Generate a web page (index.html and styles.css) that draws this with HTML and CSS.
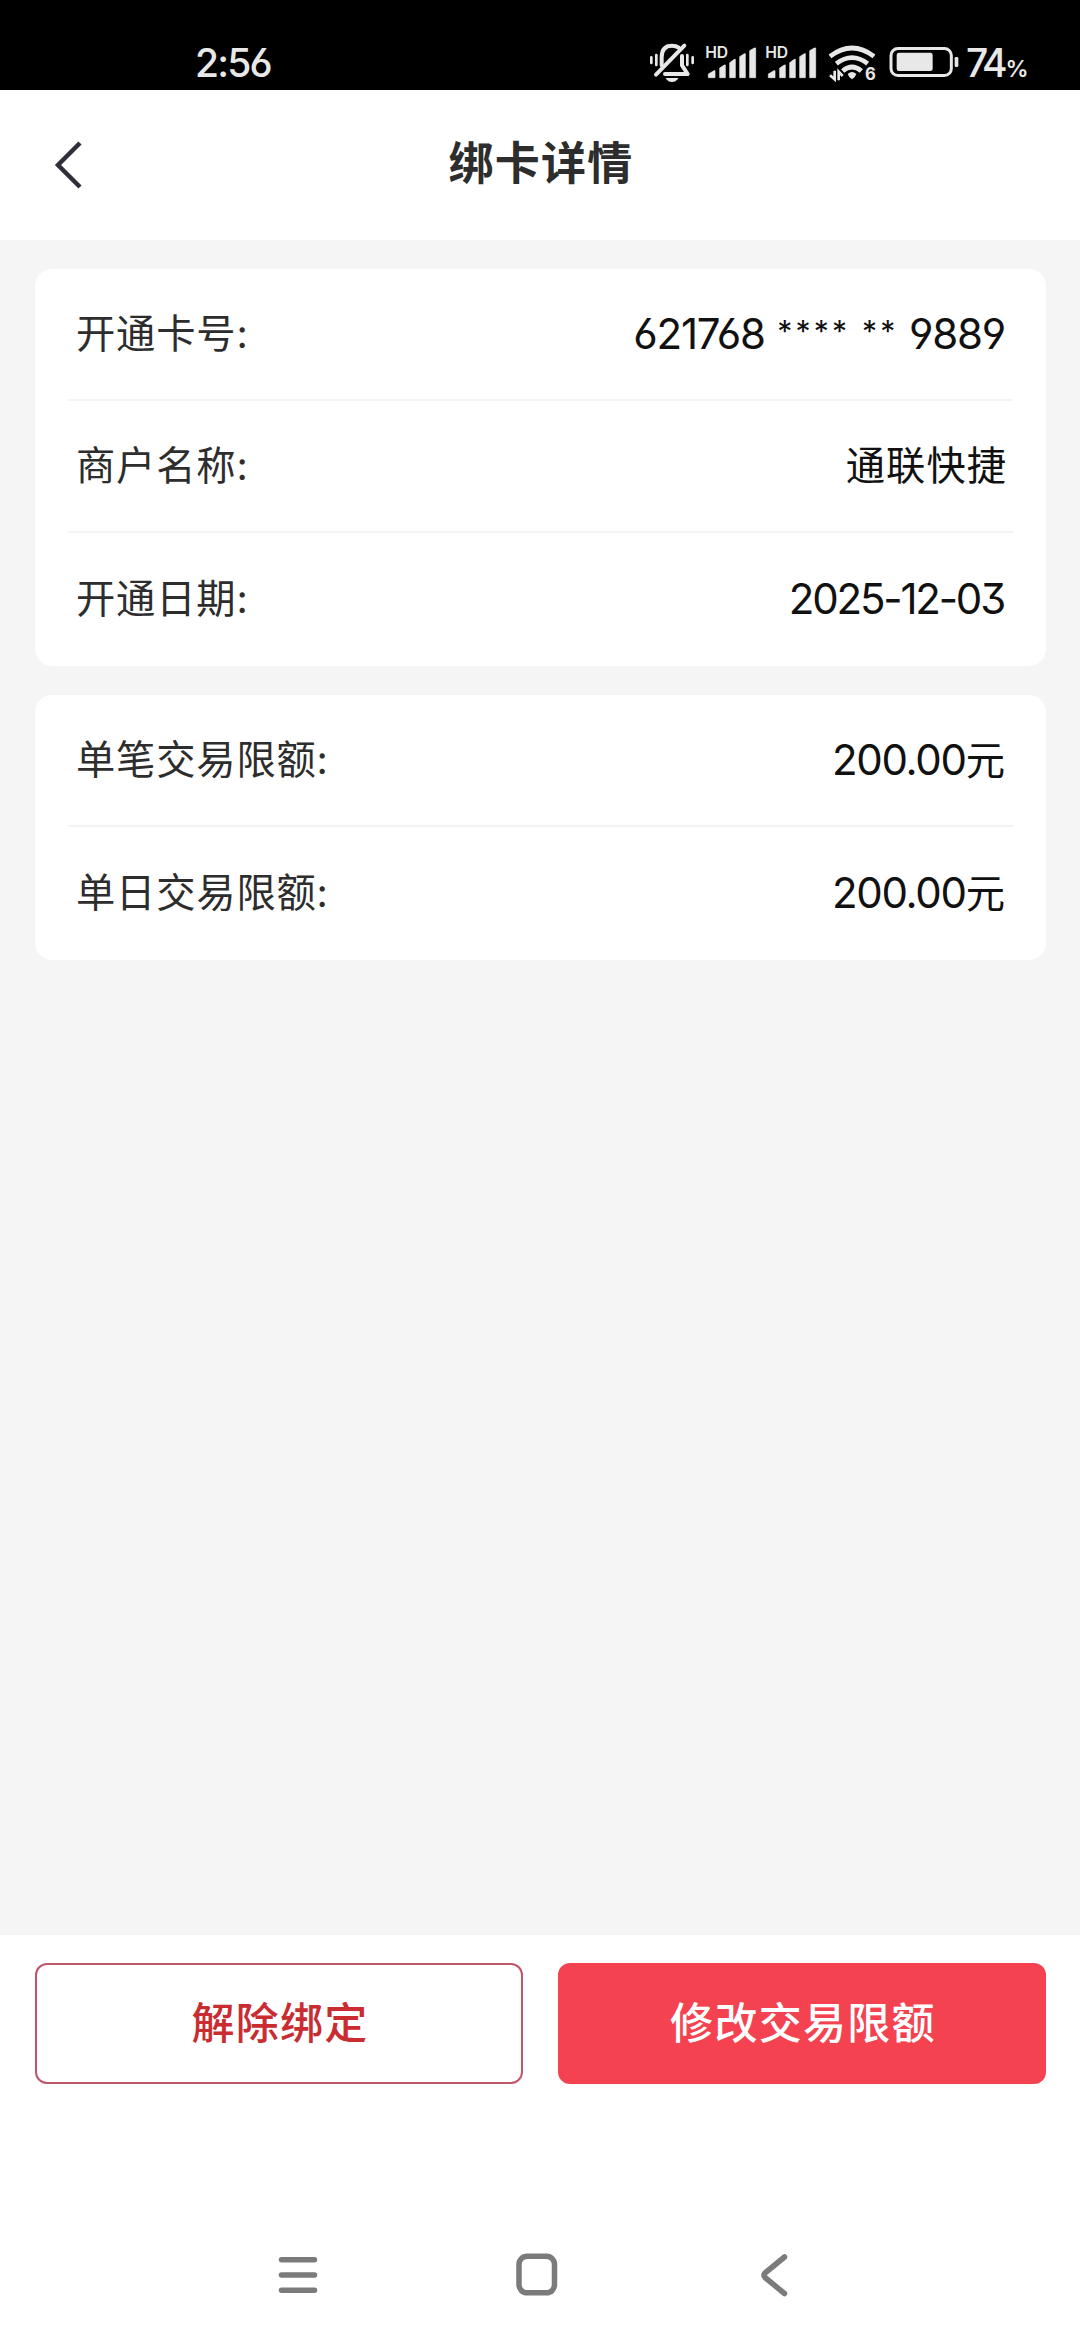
FILE: index.html
```html
<!DOCTYPE html>
<html lang="zh-CN">
<head>
<meta charset="utf-8">
<title>绑卡详情</title>
<link rel="stylesheet" href="styles.css">
</head>
<body>
<div class="screen">
  <div class="status">
    <span class="time">2:56</span>
    <div class="status-icons">
      <svg class="bell" width="46" height="42" viewBox="54 66 138 126">
        <g fill="none" stroke="#e8e8e8" stroke-width="12" stroke-linecap="round" stroke-linejoin="round">
          <path d="M92 136V112C92 86 106 77 123 77C131 77 138 79 143 83"/>
          <path d="M160 77L75 164"/>
          <path d="M153 108V136L170 162H102"/>
          <path stroke-width="8" d="M61 112V129M76 105V135M169 105V135M185 112V129"/>
        </g>
        <path fill="#e8e8e8" d="M104 174H142Q136 186 123 186Q110 186 104 174Z"/>
      </svg>
      <svg class="signal" width="52" height="42" viewBox="222 63 156 126">
        <text class="hd" x="223" y="114">HD</text>
        <path class="bars" d="M232 162L249 152H252V173H232ZM266 144L280 135H283V173H266ZM296 128L310 118H313V173H296ZM326 110L340 101H343V173H326ZM356 92L370 84H374V173H356Z"/>
      </svg>
      <svg class="signal" width="52" height="42" viewBox="222 63 156 126">
        <text class="hd" x="223" y="114">HD</text>
        <path class="bars" d="M232 162L249 152H252V173H232ZM266 144L280 135H283V173H266ZM296 128L310 118H313V173H296ZM326 110L340 101H343V173H326ZM356 92L370 84H374V173H356Z"/>
      </svg>
      <svg class="wifi" width="50" height="46" viewBox="-39 72 150 138">
        <g fill="none" stroke="#e8e8e8" stroke-width="14">
          <path d="M-33 109Q33 59 99 109"/>
          <path d="M-14 131Q33 95 80 131"/>
          <path d="M5 153Q33 129 61 153"/>
        </g>
        <path fill="#e8e8e8" d="M20 162Q33 150 46 162Q43 172 33 178Q23 172 20 162Z"/>
        <path fill="none" stroke="#e8e8e8" stroke-width="8" d="M-19 152V178L-33 166M-7 181V155L5 168"/>
        <text class="six" x="72" y="181">6</text>
      </svg>
      <svg class="battery" width="70" height="32" viewBox="145 78 210 96">
        <rect x="151" y="85.500" width="181" height="81" rx="21" fill="none" stroke="#e8e8e8" stroke-width="9"/>
        <rect x="168" y="98" width="108" height="55" rx="7" fill="#e8e8e8"/>
        <rect x="342" y="111" width="11" height="30" rx="4" fill="#e8e8e8"/>
      </svg>
      <span class="level">74<small>%</small></span>
    </div>
  </div>

  <header class="header">
    <svg class="back" width="30" height="50" viewBox="0 0 30 50">
      <path d="M26 3L4 25L26 47" fill="none" stroke="#2f2f3b" stroke-width="4.500"/>
    </svg>
    <h1>绑卡详情</h1>
  </header>

  <main class="content">
    <section class="card">
      <div class="row"><span class="label">开通卡号:</span><span class="value number">621768 <span class="mask">**** **</span> 9889</span></div>
      <div class="row"><span class="label">商户名称:</span><span class="value name">通联快捷</span></div>
      <div class="row"><span class="label">开通日期:</span><span class="value date">2025-12-03</span></div>
    </section>
    <section class="card">
      <div class="row"><span class="label">单笔交易限额:</span><span class="value"><span class="amount">200.00</span>元</span></div>
      <div class="row"><span class="label">单日交易限额:</span><span class="value"><span class="amount">200.00</span>元</span></div>
    </section>
  </main>

  <footer class="actions">
    <button class="btn outline">解除绑定</button>
    <button class="btn solid">修改交易限额</button>
  </footer>

  <nav class="nav">
    <svg width="42" height="44" viewBox="0 0 42 44"><path d="M4.500 6.700H37.500M4.500 22H37.500M4.500 37.300H37.500"/></svg>
    <svg width="42" height="44" viewBox="0 0 42 44"><rect x="3" y="3.300" width="35.500" height="36.500" rx="8"/></svg>
    <svg width="42" height="44" viewBox="0 0 42 44"><path d="M29.500 4L10 20Q8 22 10 24.500L29.500 40.500"/></svg>
  </nav>
</div>
</body>
</html>
```
FILE: styles.css
```css
* { box-sizing: border-box; }
body {
  margin: 0;
  background: #fff;
  font-family: Inter, "Noto Sans CJK SC", sans-serif;
  color: #2d2d2d;
}
.screen { width: 1080px; height: 2340px; display: flex; flex-direction: column; background: #fff; }

.status {
  height: 90px;
  padding: 34px 55px 0 195px;
  display: flex;
  justify-content: space-between;
  background: #000;
  color: #e8e8e8;
}
.time { font-size: 39px; line-height: 57px; font-weight: 500; letter-spacing: -1.8px; font-feature-settings: "ss01"; }
.status-icons { display: flex; height: 57px; align-items: flex-start; }
.status-icons svg { flex: none; }
.bell { margin: 8px 10px 0 0; }
.signal { margin: 7px 8px 0 0; }
.wifi { margin: 10px 11px 0 3px; }
.battery { margin: 12px 7px 0 0; }
.bars { fill: #e8e8e8; stroke: #e8e8e8; stroke-width: 2; stroke-linejoin: round; }
.hd { font: 600 47px Inter, sans-serif; letter-spacing: -1px; fill: #e8e8e8; }
.six { font: 700 50px Inter, sans-serif; fill: #e8e8e8; }
.level { width: 59px; font-size: 39px; line-height: 57px; font-weight: 500; letter-spacing: -4px; white-space: nowrap; }
.level small { font-size: 23px; font-weight: 600; margin-left: 2px; }

.header { height: 150px; display: grid; grid-template-columns: 160px 1fr 160px; align-items: center; }
.back { margin-left: 54px; }
h1 { margin: 0; text-align: center; font-size: 45px; line-height: 60px; font-weight: 600; letter-spacing: 1.2px; padding: 0 0 2px 2px; }

.content { flex: none; height: 1695px; padding: 29px 34px 0 35px; background: #f5f5f5; }
.card { padding: 0 33px; border-radius: 17px; background: #fff; }
.card + .card { margin-top: 29px; }
.row {
  height: 132px;
  padding: 0 7px 0 8px;
  display: flex;
  justify-content: space-between;
  align-items: center;
  border-bottom: 2px solid #f4f4f4;
  font-size: 39.300px;
  letter-spacing: 1px;
  line-height: 60px;
}
.row:last-child { height: 133px; padding-bottom: 1px; border-bottom: 0; }
.label { letter-spacing: 0.800px; }
.value { color: #111; white-space: pre; }
.name { margin-right: -1px; }
.number, .date, .amount { font-size: 42px; font-feature-settings: "ss01", "cv09"; }
.number { letter-spacing: -1.2px; margin-right: 1px; }
.mask { font-size: 30px; letter-spacing: 3.200px; margin-left: 2px; line-height: 1; vertical-align: 7px; }
.date { letter-spacing: -2.200px; margin-right: 2px; }
.amount { letter-spacing: -1.3px; }

.actions { height: 179px; padding: 28px 34px 0 35px; display: grid; grid-template-columns: 1fr 1fr; gap: 35px; }
.btn {
  height: 121px;
  padding: 0 0 7px 2px;
  border: 2px solid #c0566c;
  border-radius: 12px;
  background: #fff;
  color: #c92c31;
  font: 500 43px Inter, "Noto Sans CJK SC", sans-serif;
  letter-spacing: 1.300px;
}
.solid { border-color: #f44250; background: #f44250; color: #fff; }

.nav { margin-top: auto; height: 87px; padding: 0 283px 0 277px; display: flex; justify-content: space-between; }
.nav svg { fill: none; stroke: #7b7b7b; stroke-width: 5.500; stroke-linecap: round; stroke-linejoin: round; }
```
